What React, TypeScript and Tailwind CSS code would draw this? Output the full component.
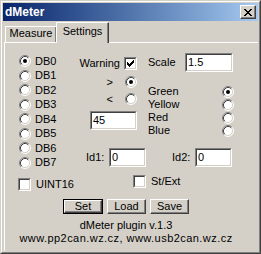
import type { ReactNode } from "react";

const dbRows: [string, string, boolean][] = [
  ["DB0", "h-[14px]", true],
  ["DB1", "h-[15px]", false],
  ["DB2", "h-[14px]", false],
  ["DB3", "h-[15px]", false],
  ["DB4", "h-[14px]", false],
  ["DB5", "h-[15px]", false],
  ["DB6", "h-[14px]", false],
  ["DB7", "h-[15px]", false],
];

const colours: [string, boolean][] = [
  ["Green", true],
  ["Yellow", false],
  ["Red", false],
  ["Blue", false],
];

function Radio({ checked }: { checked?: boolean }) {
  return (
    <svg width="12" height="12" viewBox="0 0 12 12" className="block shrink-0">
      <circle cx="6" cy="6" r="5" fill="#fff" />
      <path d="M2.11 9.89A5.5 5.5 0 0 1 9.89 2.11" fill="none" stroke="#808080" />
      <path d="M9.89 2.11A5.5 5.5 0 0 1 2.11 9.89" fill="none" stroke="#fff" />
      <path d="M2.82 9.18A4.5 4.5 0 0 1 9.18 2.82" fill="none" stroke="#404040" />
      <path d="M9.18 2.82A4.5 4.5 0 0 1 2.82 9.18" fill="none" stroke="#D4D0C8" />
      {checked && <circle cx="6" cy="6" r="2" fill="#000" />}
    </svg>
  );
}

// classic 7x7 tick, one 3px run per column
const tickTops = [2, 3, 4, 3, 2, 1, 0];

function Check({ checked }: { checked?: boolean }) {
  return (
    <div className="h-[13px] w-[13px] shrink-0 border border-t-[#808080] border-l-[#808080] border-r-white border-b-white">
      <div className="flex h-full w-full items-center justify-center border border-t-[#404040] border-l-[#404040] border-r-[#D4D0C8] border-b-[#D4D0C8] bg-white">
        {checked && (
          <svg width="7" height="7" viewBox="0 0 7 7" className="block" shapeRendering="crispEdges">
            {tickTops.map((t, i) => (
              <rect key={i} x={i} y={t} width="1" height="3" fill="#000" />
            ))}
          </svg>
        )}
      </div>
    </div>
  );
}

function Edit({ value, className }: { value: string; className: string }) {
  return (
    <div
      className={`${className} h-[19px] shrink-0 border border-t-[#808080] border-l-[#808080] border-r-white border-b-white`}
    >
      <div className="flex h-full items-center border border-t-[#404040] border-l-[#404040] border-r-[#D4D0C8] border-b-[#D4D0C8] bg-white pl-[1px]">
        {value}
      </div>
    </div>
  );
}

function Button({ children, className }: { children: ReactNode; className: string }) {
  return (
    <div
      className={`${className} flex h-full items-center justify-center border border-t-white border-l-white border-r-[#404040] border-b-[#404040] shadow-[inset_-1px_-1px_#808080]`}
    >
      {children}
    </div>
  );
}

const xRows: [number, number][][] = [
  [[0, 2], [6, 2]],
  [[1, 2], [5, 2]],
  [[2, 4]],
  [[3, 2]],
  [[2, 4]],
  [[1, 2], [5, 2]],
  [[0, 2], [6, 2]],
];

function CloseButton() {
  return (
    <div className="ml-auto flex h-[14px] w-[16px] items-center justify-center border border-t-white border-l-white border-r-[#404040] border-b-[#404040] bg-[#D4D0C8] shadow-[inset_-1px_-1px_#808080]">
      <svg width="8" height="7" viewBox="0 0 8 7" className="block" shapeRendering="crispEdges">
        {xRows.map((row, y) =>
          row.map(([x, w]) => <rect key={`${y}-${x}`} x={x} y={y} width={w} height="1" fill="#000" />)
        )}
      </svg>
    </div>
  );
}

export default function App() {
  return (
    <div className="h-[254px] w-[261px] overflow-hidden border border-t-[#D4D0C8] border-l-[#D4D0C8] border-r-[#404040] border-b-[#404040] bg-[#D4D0C8] font-[Liberation_Sans,Arial,sans-serif] text-[11px] leading-[13px] text-black">
      <div className="flex h-full flex-col overflow-hidden border border-t-white border-l-white border-r-[#808080] border-b-[#808080] p-px">
        {/* title bar */}
        <div className="flex h-[18px] shrink-0 items-center bg-linear-to-r from-[#0A246A] to-[#A6CAF0] px-[2px]">
          <span className="text-[12px] font-bold text-white">dMeter</span>
          <CloseButton />
        </div>

        {/* tabs */}
        <div className="flex h-[21px] shrink-0 items-end pl-[2px]">
          <div className="flex h-[16px] w-[52px] justify-center border-l border-t border-r border-l-white border-t-white border-r-[#404040] shadow-[inset_-1px_0_#808080]">
            Measure
          </div>
          <div className="relative z-10 -mb-px -ml-px flex h-[21px] w-[53px] justify-center border-l border-t border-r border-l-white border-t-white border-r-[#404040] bg-[#D4D0C8] pt-[2px] shadow-[inset_-1px_0_#808080]">
            Settings
          </div>
        </div>

        {/* tab page */}
        <div className="ml-px flex-1 border-l border-t border-white">
          <div className="flex">
            <div className="flex w-[77px] flex-col pl-[13px] pt-[11px]">
              {dbRows.map(([label, h, on]) => (
                <div key={label} className={`${h} flex items-center`}>
                  <div className="flex w-[13px] justify-end">
                    <Radio checked={on} />
                  </div>
                  <span className="ml-[4px]">{label}</span>
                </div>
              ))}
              <div className="mt-[8px] flex h-[13px] items-center">
                <Check />
                <span className="ml-[5px]">UINT16</span>
              </div>
            </div>

            <div className="flex flex-col">
              <div className="flex">
                <div className="flex w-[55px] flex-col items-end pt-[14px]">
                  <div className="flex h-[13px] items-center">
                    <span>Warning</span>
                    <span className="ml-[4px]">
                      <Check checked />
                    </span>
                  </div>
                  <div className="mt-[6px] flex h-[12px] items-center">
                    <span>&gt;</span>
                    <span className="ml-[12px]">
                      <Radio checked />
                    </span>
                  </div>
                  <div className="mt-[5px] flex h-[12px] items-center">
                    <span>&lt;</span>
                    <span className="ml-[12px]">
                      <Radio />
                    </span>
                  </div>
                  <Edit value="45" className="mt-[6px] w-[47px]" />
                </div>

                <div className="ml-[11px] flex w-[86px] flex-col pt-[10px]">
                  <div className="flex h-[19px] items-center justify-between">
                    <span>Scale</span>
                    <Edit value="1.5" className="mr-px w-[48px]" />
                  </div>
                  <div className="mt-[13px] flex flex-col">
                    {colours.map(([name, on]) => (
                      <div key={name} className="flex h-[13px] items-center justify-between">
                        <span>{name}</span>
                        <Radio checked={on} />
                      </div>
                    ))}
                  </div>
                </div>
              </div>

              <div className="mt-[11px] flex h-[19px] items-center pl-[4px]">
                <span className="w-[23px]">Id1:</span>
                <Edit value="0" className="w-[37px]" />
                <span className="ml-[26px] w-[23px]">Id2:</span>
                <Edit value="0" className="w-[37px]" />
              </div>

              <div className="mt-[8px] flex h-[13px] items-center pl-[51px]">
                <Check />
                <span className="ml-[5px]">St/Ext</span>
              </div>
            </div>
          </div>

          <div className="flex w-[242px] flex-col items-center">
            <div className="mt-[8px] flex h-[15px] gap-[4px]">
              <div className="h-full w-[40px] border border-black">
                <Button className="w-full">Set</Button>
              </div>
              <Button className="w-[39px]">Load</Button>
              <Button className="w-[39px]">Save</Button>
            </div>
            <div className="mt-[5px]">dMeter plugin v.1.3</div>
            <div className="tracking-[0.45px] whitespace-nowrap">www.pp2can.wz.cz, www.usb2can.wz.cz</div>
          </div>
        </div>
      </div>
    </div>
  );
}
